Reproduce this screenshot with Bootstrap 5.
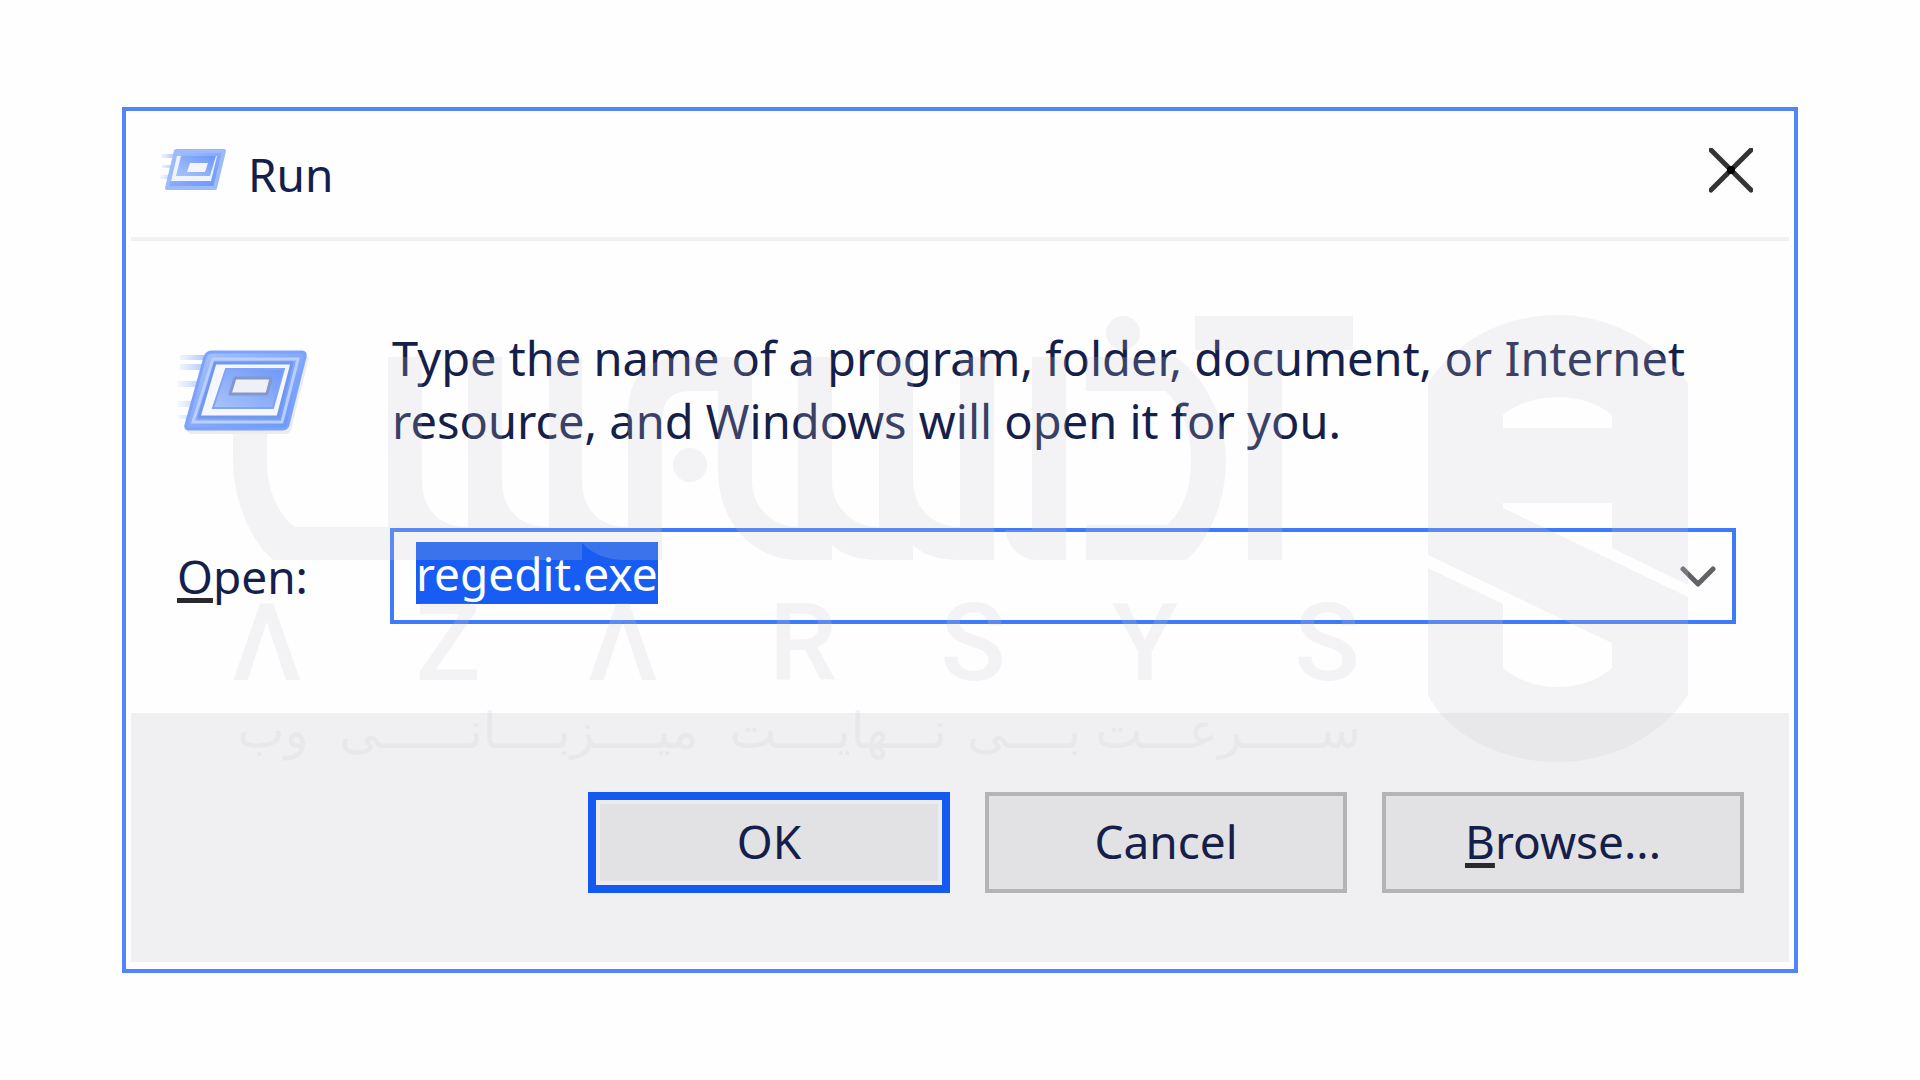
<!DOCTYPE html>
<html lang="en">
<head>
<meta charset="utf-8">
<meta name="viewport" content="width=device-width, initial-scale=1">
<title>Run</title>
<link href="https://cdn.jsdelivr.net/npm/bootstrap@5.3.0/dist/css/bootstrap.min.css" rel="stylesheet">
<style>
  body { background: #fefefe; color: #15204a; font-family: "Noto Sans", "Open Sans", sans-serif; font-size: 46px; line-height: 63px; }
  .stage { padding: 107px 122px; }
  .run-dialog { border: 4px solid #5284fb; background: #fefefe; }
  .title-bar { height: 126px; padding: 0 41px 0 34px; gap: 20px; }
  .title-rule { height: 4px; margin: 0 5px; background: #f1f1f3; }
  .run-title { font-size: inherit; line-height: inherit; font-weight: 400; }
  .run-form { display: grid; grid-template-columns: 213px 1fr; row-gap: 75px; padding: 86px 58px 89px 51px; align-items: center; }
  .message { font-size: 47px; padding-left: 2px; }
  .key { text-decoration: underline; text-decoration-color: #2a2a2e; text-decoration-thickness: 5px; text-underline-offset: 4px; text-decoration-skip-ink: none; }
  .combo { border: 4px solid #3f7afb; height: 96px; background: #fefefe; }
  .combo input { border: 0; outline: 0; background: transparent; color: inherit; padding: 0 0 6px 22px; line-height: 63px; min-width: 0; }
  .combo input::selection { background: #175df3; color: #fff; }
  .combo button, .close-x { border: 0; background: transparent; padding: 0; line-height: 0; }
  .combo button { padding: 0 16px; }
  .actions { background: #f0f0f2; margin: 0 5px 7px; padding: 79px 45px 69px; gap: 35px; }
  .dlg-btn { width: 362px; height: 101px; border: 4px solid #b4b4b6; background: #e2e2e4; color: inherit; padding: 0 0 2px; }
  .dlg-btn.is-default { border: 8px solid #155af0; box-shadow: inset 0 0 0 4px #ebebf0; }
  .watermark { inset: 0; width: 100%; height: 100%; pointer-events: none; z-index: 2; }
</style>
</head>
<body>
<main class="stage">
  <section class="run-dialog position-relative" role="dialog" aria-labelledby="run-title">
    <header class="title-bar d-flex align-items-center">
      <svg width="68" height="50" viewBox="0 0 68 50" aria-hidden="true">
        <defs>
          <linearGradient id="frame" x1="0" y1="0" x2="1" y2="1"><stop offset="0" stop-color="#a9c3fd"/><stop offset=".5" stop-color="#86a9fa"/><stop offset="1" stop-color="#6696fb"/></linearGradient>
          <linearGradient id="core" x1="0" y1="1" x2="1" y2="0"><stop offset="0" stop-color="#a9c3fb"/><stop offset="1" stop-color="#6c98f8"/></linearGradient>
          <linearGradient id="trail" x1="0" x2="1"><stop offset="0" stop-color="#a3bffd" stop-opacity=".1"/><stop offset="1" stop-color="#86a9fa" stop-opacity=".7"/></linearGradient>
        </defs>
        <path d="M1 5h14v4H1zM2 16h10v3H2zM0 26h12v4H0z" fill="url(#trail)"/>
        <path d="M16 2H64L55 39H7Z" fill="url(#frame)" stroke="#9dbafc" stroke-width="4" stroke-linejoin="round"/>
        <path d="M17 7H57L51 32H11Z" fill="#eef3fe"/>
        <path d="M21 7H56L50 27H16Z" fill="url(#core)"/>
        <path d="M30 14H48L45 23H27Z" fill="#f3f5fb"/>
      </svg>
      <h1 id="run-title" class="run-title m-0 flex-grow-1">Run</h1>
      <button type="button" class="close-x" aria-label="Close">
        <svg width="44" height="52" viewBox="0 0 44 52"><path d="M2 2L42 42M42 2L2 42" stroke="#343436" stroke-width="5" stroke-linecap="round"/><circle cx="22" cy="22" r="4" fill="#000"/></svg>
      </button>
    </header>
    <div class="title-rule"></div>
    <form onsubmit="return false">
      <div class="run-form">
        <svg width="138" height="88" viewBox="0 -4 138 88" overflow="visible" aria-hidden="true">
          <path d="M3 5H30V10H3ZM3 14H28V20H3ZM0 31H24V37H0ZM0 51H18V57H0ZM2 65H12V69H2Z" fill="url(#trail)"/>
          <path d="M34 6H130Q133 7 131 12L114 80Q113 84 108 84H14Q9 82 11 78L26 12Q28 6 34 6Z" fill="#00000012"/>
          <path d="M35 2H125Q129 2 128 7L111 75Q110 79 106 79H12Q8 79 9 75L28 7Q30 2 35 2Z" fill="url(#frame)" stroke="#7ba3fb" stroke-width="3"/>
          <path d="M36 9H121L105 72H16Z" fill="none" stroke="#b9cffd" stroke-width="3"/>
          <path d="M38 13H115L101 67H22Z" fill="#f5f7fc" stroke="#6f98ee" stroke-width="3" stroke-linejoin="round"/>
          <path d="M49 19H107L96 58H36Z" fill="url(#core)" stroke="#7fa4f6" stroke-width="2"/>
          <path d="M58 28H94L90 44H53Z" fill="#eef0f6" stroke="#8397cb" stroke-width="3" stroke-linejoin="round"/>
        </svg>
        <p class="message m-0">Type the name of a program, folder, document, or Internet<br>resource, and Windows will open it for you.</p>
        <label for="cmd"><span class="key">O</span>pen:</label>
        <div class="combo d-flex align-items-center">
          <input id="cmd" class="flex-grow-1 h-100" type="text" value="regedit.exe" autocomplete="off" spellcheck="false">
          <button type="button" aria-label="Show history">
            <svg width="36" height="28" viewBox="0 -4 36 28"><path d="M3 3L18 18L33 3" fill="none" stroke="#626266" stroke-width="5" stroke-linecap="round" stroke-linejoin="round"/></svg>
          </button>
        </div>
      </div>
      <div class="actions d-flex justify-content-end">
        <button type="submit" class="dlg-btn is-default">OK</button>
        <button type="button" class="dlg-btn">Cancel</button>
        <button type="button" class="dlg-btn"><span class="key">B</span>rowse...</button>
      </div>
    </form>

    <svg class="watermark position-absolute" viewBox="126 111 1668 858" fill="#cbcbd4" opacity=".2" aria-hidden="true">
      <!-- Wordmark -->
      <path d="M233 434V460C233 500 250 540 273 560H582V357H549V527C520 527 502 510 502 480V357H468V527C440 527 422 510 422 480V357H388V527H295C278 515 267 490 267 460V434Z"/>
      <path d="M582 543Q598 560 625 560H662V420Q662 391 690 391H718V470C718 520 750 560 800 560H832V545Q848 560 879 560H913V545Q928 560 960 560H994V357H960V527C935 527 913 510 913 480V357H879V527C855 527 832 510 832 480V357H798V527C775 527 752 510 752 480V357H685Q630 357 628 410V527C600 527 582 510 582 480Z"/>
      <circle cx="690" cy="465" r="17"/>
      <path d="M1032 357H1066V560H1034Q1010 556 1005 530H1032Z"/>
      <circle cx="1123" cy="333" r="17"/>
      <path d="M1086 357H1175C1205 375 1226 420 1226 460C1226 500 1210 540 1186 560H1086V525H1167C1182 512 1191 490 1191 460C1191 430 1182 405 1165 391H1086Z"/>
      <path d="M1195 316H1353V350H1282V560H1248V350H1195Z"/>
      <!-- Emblem -->
      <path fill-rule="evenodd" d="M1428 383C1460 335 1510 315 1558 315S1655 338 1688 383V695C1660 738 1610 762 1558 762S1450 738 1428 695ZM1503 428H1612V415Q1590 397 1558 397T1503 415ZM1503 503V508L1688 597V585L1612 548V503ZM1428 555V568L1503 604V668Q1526 687 1558 687T1612 668V643Z"/>
      <g font-family="Roboto, sans-serif" font-weight="500" font-size="108" text-anchor="middle">
        <text x="267" y="680">Λ</text><text x="448" y="680">Z</text><text x="623" y="680">Λ</text><text x="803" y="680">R</text><text x="973" y="680">S</text><text x="1145" y="680">Y</text><text x="1327" y="680">S</text>
      </g>
      <g font-family="'DejaVu Sans', sans-serif" font-size="50" text-anchor="middle">
        <text x="1228" y="748">ســـــرعـــت</text><text x="1024" y="748">بــــی</text><text x="838" y="748">نـــهایــــت</text><text x="519" y="748">میــــزبــــانــــــی</text><text x="273" y="748">وب</text>
      </g>
    </svg>
  </section>
</main>
<script src="https://cdn.jsdelivr.net/npm/bootstrap@5.3.0/dist/js/bootstrap.bundle.min.js"></script>
<script>
  const cmd = document.getElementById('cmd');
  cmd.focus();
  cmd.select();
</script>
</body>
</html>
